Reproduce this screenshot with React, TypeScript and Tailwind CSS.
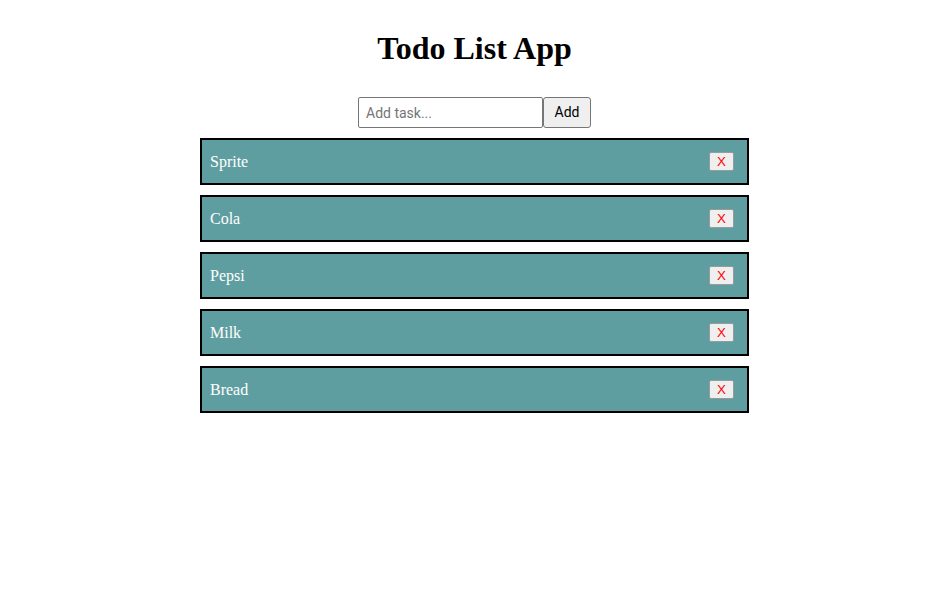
import { useState } from "react";

const initialTodos = ["Sprite", "Cola", "Pepsi", "Milk", "Bread"];

export default function App() {
  const [todos, setTodos] = useState(initialTodos);
  const [task, setTask] = useState("");

  function addTask() {
    if (!task.trim()) return;
    setTodos([...todos, task.trim()]);
    setTask("");
  }

  return (
    <div className="min-h-screen bg-white pt-[30px] font-['Liberation_Serif',serif] text-black">
      <h1 className="h-[37px] text-center text-[32px] leading-[37px] font-bold">Todo List App</h1>

      <div className="mt-[30px] flex justify-center">
        <input
          value={task}
          onChange={(e) => setTask(e.target.value)}
          placeholder="Add task..."
          className="h-[31px] w-[185px] rounded-[2px] border border-[#767676] px-[7px] font-['Roboto',sans-serif] text-[14px] text-black placeholder:text-[#757575]"
        />
        <button
          onClick={addTask}
          className="h-[31px] w-[48px] rounded-[3px] border border-[#767676] bg-[#efefef] font-['Roboto',sans-serif] text-[14px] text-black"
        >
          Add
        </button>
      </div>

      <ul className="mx-auto mt-[10px] flex w-[549px] flex-col gap-[10px]">
        {todos.map((todo, i) => (
          <li
            key={i}
            className="flex h-[47px] items-center justify-between border-2 border-black bg-[#5f9ea0] pr-[13px] pl-[8px] text-[16px] text-white"
          >
            <span>{todo}</span>
            <button
              onClick={() => setTodos(todos.filter((_, j) => j !== i))}
              className="h-[19px] w-[25px] rounded-[2px] border border-[#9a9a9a] bg-[#efefef] font-['Liberation_Sans',sans-serif] text-[13.33px] leading-[15px] text-[#ff0000]"
            >
              X
            </button>
          </li>
        ))}
      </ul>
    </div>
  );
}
